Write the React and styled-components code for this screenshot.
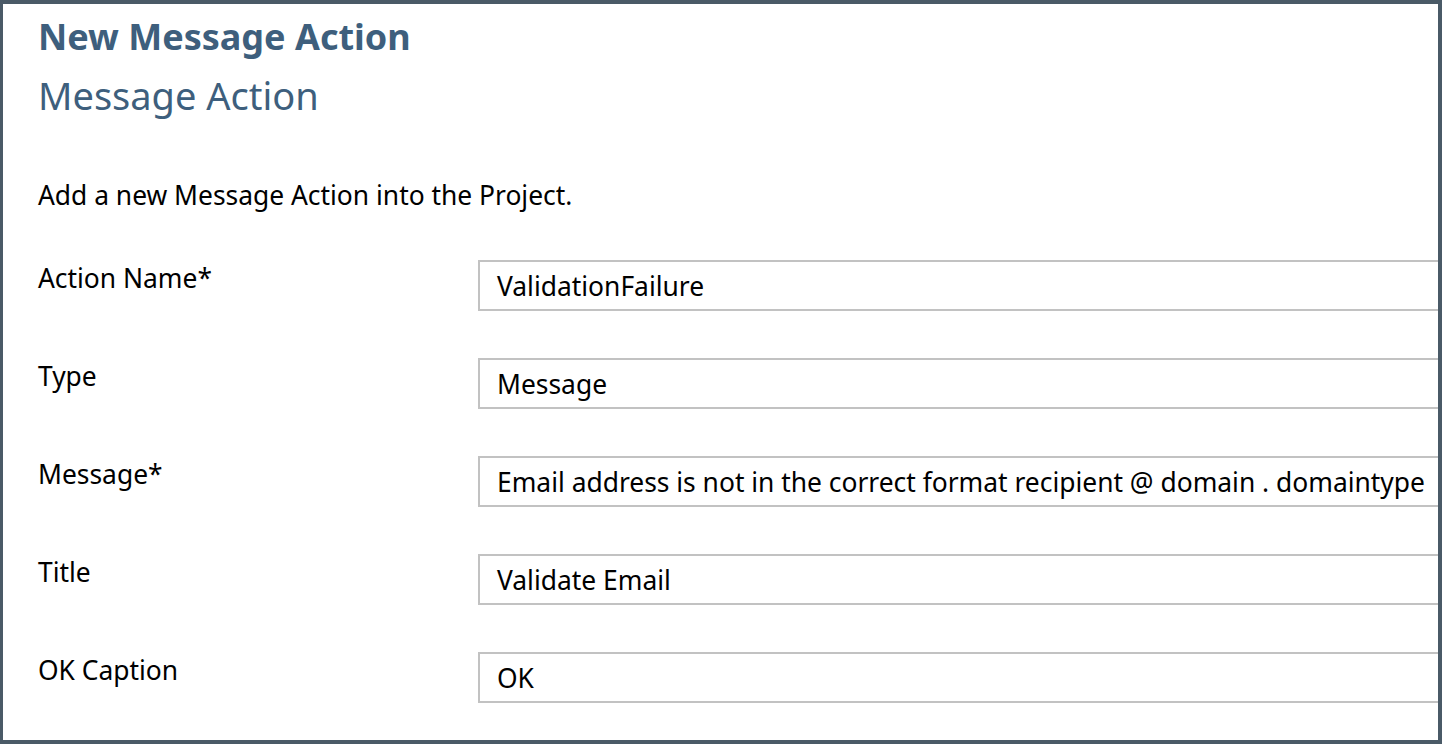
import React from "react";
import styled, { createGlobalStyle } from "styled-components";

const GlobalStyle = createGlobalStyle`
  html, body {
    margin: 0;
    padding: 0;
    background: #ffffff;
  }
  * {
    box-sizing: border-box;
  }
`;

const Frame = styled.div`
  width: 1442px;
  height: 744px;
  border-style: solid;
  border-color: #4a5a67;
  border-width: 4px 4px 4px 3px;
  background: #ffffff;
  overflow: hidden;
  padding: 9px 0 0 35px;
  font-family: "Noto Sans", "Open Sans", sans-serif;
  color: #000000;
`;

const Title = styled.h1`
  margin: ${(props) => (props.bold ? "0" : "10px 0 0")};
  font-size: ${(props) => (props.bold ? "36px" : "38px")};
  line-height: 48px;
  font-weight: ${(props) => (props.bold ? 700 : 400)};
  color: #3e5f7d;
`;

const Intro = styled.p`
  margin: 60px 0 0;
  font-size: 26.4px;
  line-height: 32px;
`;

const Form = styled.div`
  display: flex;
  flex-direction: column;
  gap: 47px;
  margin-top: 49px;
`;

const Row = styled.div`
  display: grid;
  grid-template-columns: 440px 1000px;
  align-items: start;
`;

const Label = styled.label`
  font-size: 26.4px;
  line-height: 32px;
  padding-top: 2px;
`;

const Field = styled.div`
  height: 51px;
  border: 2px solid #c2c2c2;
  border-right: none;
  padding: 0 17px;
  display: flex;
  align-items: center;
  font-size: 26.4px;
  white-space: nowrap;
`;

const fields = [
  { label: "Action Name*", value: "ValidationFailure" },
  { label: "Type", value: "Message" },
  {
    label: "Message*",
    value: "Email address is not in the correct format recipient @ domain . domaintype",
  },
  { label: "Title", value: "Validate Email" },
  { label: "OK Caption", value: "OK" },
];

export default function App() {
  return (
    <>
      <GlobalStyle />
      <Frame>
        <Title bold>New Message Action</Title>
        <Title>Message Action</Title>
        <Intro>Add a new Message Action into the Project.</Intro>
        <Form>
          {fields.map((f) => (
            <Row key={f.label}>
              <Label>{f.label}</Label>
              <Field>{f.value}</Field>
            </Row>
          ))}
        </Form>
      </Frame>
    </>
  );
}
